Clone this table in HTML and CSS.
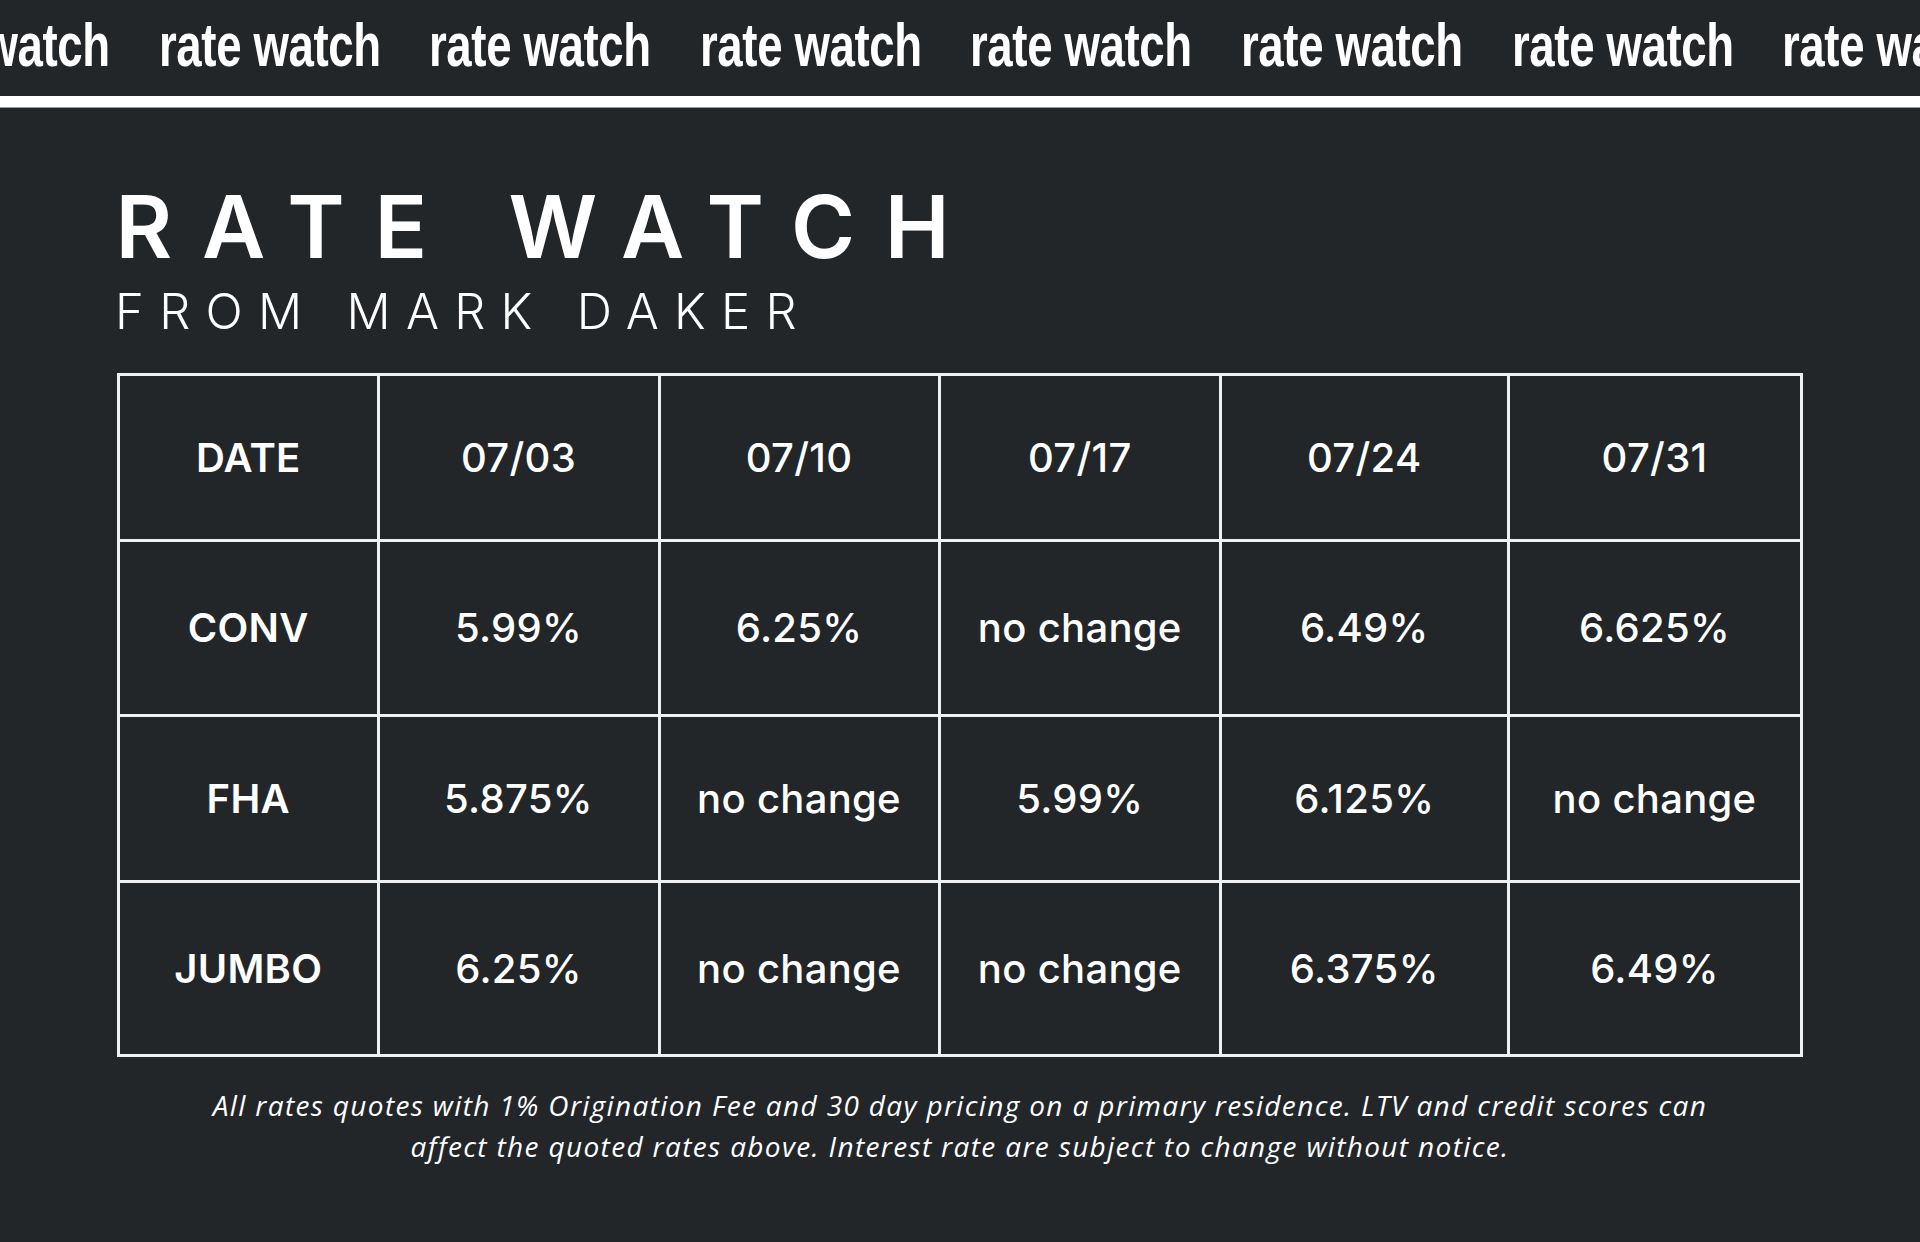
FILE: index.html
```html
<!DOCTYPE html>
<html lang="en">
<head>
<meta charset="utf-8">
<title>Rate Watch</title>
<link rel="stylesheet" href="styles.css">
</head>
<body>
<header class="ticker">
  <div class="ticker-row">
    <span class="tick"><span class="tick-text">rate watch</span></span>
    <span class="tick"><span class="tick-text">rate watch</span></span>
    <span class="tick"><span class="tick-text">rate watch</span></span>
    <span class="tick"><span class="tick-text">rate watch</span></span>
    <span class="tick"><span class="tick-text">rate watch</span></span>
    <span class="tick"><span class="tick-text">rate watch</span></span>
    <span class="tick"><span class="tick-text">rate watch</span></span>
    <span class="tick"><span class="tick-text">rate watch</span></span>
    <span class="tick"><span class="tick-text">rate watch</span></span>
  </div>
</header>
<div class="rule"></div>
<main class="content">
  <h1 class="title">RATE WATCH</h1>
  <p class="subtitle">FROM MARK DAKER</p>
  <div class="rates">
    <div class="cell head">DATE</div>
    <div class="cell date">07/03</div>
    <div class="cell date">07/10</div>
    <div class="cell date">07/17</div>
    <div class="cell date">07/24</div>
    <div class="cell date">07/31</div>

    <div class="cell head">CONV</div>
    <div class="cell">5.99%</div>
    <div class="cell">6.25%</div>
    <div class="cell">no change</div>
    <div class="cell">6.49%</div>
    <div class="cell">6.625%</div>

    <div class="cell head">FHA</div>
    <div class="cell">5.875%</div>
    <div class="cell">no change</div>
    <div class="cell">5.99%</div>
    <div class="cell">6.125%</div>
    <div class="cell">no change</div>

    <div class="cell head">JUMBO</div>
    <div class="cell">6.25%</div>
    <div class="cell">no change</div>
    <div class="cell">no change</div>
    <div class="cell">6.375%</div>
    <div class="cell">6.49%</div>
  </div>
  <p class="note">All rates quotes with 1% Origination Fee and 30 day pricing on a primary residence. LTV and credit scores can<br>affect the quoted rates above. Interest rate are subject to change without notice.</p>
</main>
</body>
</html>
```
FILE: styles.css
```css
html, body {
  margin: 0;
  padding: 0;
}

body {
  background: #232629;
  color: #ffffff;
  font-family: "Inter", "Liberation Sans", sans-serif;
  width: 1920px;
  height: 1242px;
  overflow: hidden;
}

.ticker {
  height: 96px;
  overflow: hidden;
  box-sizing: border-box;
  padding-top: 14px;
}

.ticker-row {
  display: flex;
  margin-left: -112px;
  white-space: nowrap;
}

.tick {
  flex: 0 0 270.6px;
  width: 270.6px;
  font-family: "Liberation Sans", Arial, sans-serif;
  font-weight: 700;
  font-size: 62px;
  line-height: 62px;
  letter-spacing: -0.5px;
}

.tick-text {
  display: inline-block;
  transform: scaleX(0.735);
  transform-origin: left center;
}

.rule {
  height: 11px;
  background: #ffffff;
  border-bottom: 1px solid #9c9c9c;
}

.content {
  padding-left: 117px;
}

.title {
  margin: 74.9px 0 0 -1.5px;
  font-family: "Inter", "Liberation Sans", sans-serif;
  font-weight: 600;
  font-size: 87px;
  line-height: 87px;
  letter-spacing: 29.7px;
}

.subtitle {
  margin: 16.8px 0 0 -2px;
  font-family: "Inter", "Liberation Sans", sans-serif;
  font-weight: 300;
  font-size: 49px;
  line-height: 49px;
  letter-spacing: 15.3px;
}

.rates {
  margin-top: 37.3px;
  display: grid;
  grid-template-columns: 256.5px 278px 277px 278.5px 284.5px 290px;
  grid-template-rows: 163.5px 172px 162.5px 171.5px;
  gap: 3px;
  padding: 3px;
  background: #f0f0f0;
  width: max-content;
}

.cell {
  background: #232629;
  display: flex;
  align-items: center;
  justify-content: center;
  font-family: "Inter", "Liberation Sans", sans-serif;
  font-weight: 500;
  font-size: 40px;
  line-height: 1;
  letter-spacing: 0.3px;
}

.cell.head {
  font-weight: 600;
}

.note {
  margin: 27.9px 0 0 -117px;
  text-align: center;
  font-family: "Open Sans", "Liberation Sans", sans-serif;
  font-style: italic;
  font-size: 28px;
  line-height: 41px;
  letter-spacing: 1.35px;
}
```
